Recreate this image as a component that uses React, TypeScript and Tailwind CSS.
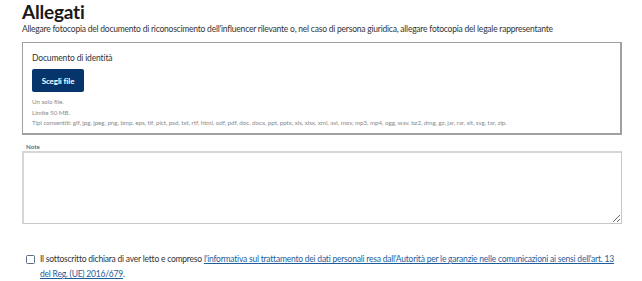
export default function App() {
  return (
    <div className="min-h-[281px] w-[642px] bg-white font-['Lato','Open_Sans',sans-serif] text-[#19191a]">
      <div className="pl-[22px] pr-[20px]">
        {/* Heading */}
        <h2 className="text-[19px] font-bold leading-[23px] tracking-[-0.2px]">Allegati</h2>
        <p className="mt-0 text-[8.5px] leading-[12px] tracking-[-0.22px] text-[#333]">
          Allegare fotocopia del documento di riconoscimento dell'influencer rilevante o, nel caso di persona giuridica,
          allegare fotocopia del legale rappresentante
        </p>

        {/* Upload box */}
        <div className="mt-[7px] h-[93px] w-[600px] border border-[#a0a0a0] border-b-2 border-r-2 px-[9px] pt-[9px]">
          <div className="text-[8.5px] leading-[12px] tracking-[-0.15px] text-[#333]">Documento di identità</div>
          <button className="mt-[5px] h-[23px] w-[52px] rounded-[2px] bg-[#06356b] text-[8px] font-bold tracking-[-0.1px] text-white">
            Scegli file
          </button>
          <div className="mt-[5px] text-[6.3px] leading-[10.5px] tracking-[-0.08px] text-[#8c8c8c]">
            <div>Un solo file.</div>
            <div>Limite 50 MB.</div>
            <div>
              Tipi consentiti: gif, jpg, jpeg, png, bmp, eps, tif, pict, psd, txt, rtf, html, odf, pdf, doc, docx, ppt,
              pptx, xls, xlsx, xml, avi, mov, mp3, mp4, ogg, wav, bz2, dmg, gz, jar, rar, sit, svg, tar, zip.
            </div>
          </div>
        </div>

        {/* Note */}
        <label className="mt-[7px] block pl-[4px] text-[6.2px] font-bold leading-[9px] text-[#5c6f82]">Note</label>
        <textarea className="block h-[73px] w-[600px] resize-y border border-[#c5c7c9] border-t-2 border-l-2 border-t-[#d4d6d8] border-l-[#d4d6d8]"></textarea>

        {/* Consent */}
        <div className="mt-[28px] flex items-start gap-[5px] pl-[4px]">
          <span className="mt-[3px] h-[9px] w-[9px] shrink-0 rounded-[1.5px] border border-[#5c6f82]"></span>
          <p className="text-[8.5px] leading-[15px] tracking-[-0.22px] text-[#333]">
            Il sottoscritto dichiara di aver letto e compreso{" "}
            <a href="#" className="text-[#1f5c99] underline">
              l'informativa sul trattamento dei dati personali resa dall'Autorità per le garanzie nelle comunicazioni ai
              sensi dell'art. 13 del Reg. (UE) 2016/679
            </a>
            .
          </p>
        </div>
      </div>
    </div>
  );
}
